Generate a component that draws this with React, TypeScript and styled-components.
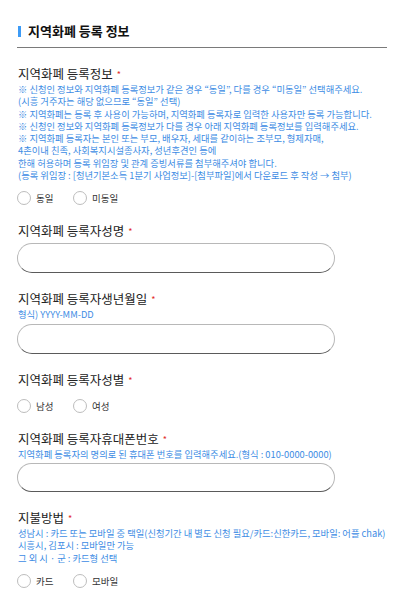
import styled, { createGlobalStyle } from "styled-components";

const GlobalStyle = createGlobalStyle`
  html, body {
    margin: 0;
    padding: 0;
    background: #ffffff;
  }
  body {
    font-family: "Noto Sans CJK KR", "Noto Sans", sans-serif;
    color: #222222;
  }
`;

/**
 * 라디오 옵션 타입
 */
interface RadioGroupProps {
  name: string;
  options: string[];
}

/**
 * 라디오 그룹 컴포넌트
 */
const RadioGroup = ({ name, options }: RadioGroupProps) => (
  <RadioRow>
    {options.map((option) => (
      <RadioOption key={option}>
        <RadioCircle type="radio" name={name} />
        <span>{option}</span>
      </RadioOption>
    ))}
  </RadioRow>
);

const registerNotes = [
  "※ 신청인 정보와 지역화폐 등록정보가 같은 경우 “동일”, 다를 경우 “미동일” 선택해주세요.",
  "(시흥 거주자는 해당 없으므로 “동일” 선택)",
  "※ 지역화폐는 등록 후 사용이 가능하며, 지역화폐 등록자로 입력한 사용자만 등록 가능합니다.",
  "※ 신청인 정보와 지역화폐 등록정보가 다를 경우 아래 지역화폐 등록정보를 입력해주세요.",
  "※ 지역화폐 등록자는 본인 또는 부모, 배우자, 세대를 같이하는 조부모, 형제자매,",
  "4촌이내 친족, 사회복지시설종사자, 성년후견인 등에",
  "한해 허용하며 등록 위임장 및 관계 증빙서류를 첨부해주셔야 합니다.",
  "(등록 위임장 : [청년기본소득 1분기 사업정보]-[첨부파일]에서 다운로드 후 작성 → 첨부)",
];

const payNotes = [
  "성남시 : 카드 또는 모바일 중 택일(신청기간 내 별도 신청 필요/카드:신한카드, 모바일: 어플 chak)",
  "시흥시, 김포시 : 모바일만 가능",
  "그 외 시 · 군 : 카드형 선택",
];

/**
 * 지역화폐 등록 정보 폼
 */
const App = () => {
  return (
    <>
      <GlobalStyle />
      <Page>
        {/* 타이틀 */}
        <Header>
          <TitleBar />
          <Title>지역화폐 등록 정보</Title>
        </Header>

        {/* 등록정보 동일 여부 */}
        <Section>
          <Label>
            지역화폐 등록정보<Required>*</Required>
          </Label>
          <Notes>
            {registerNotes.map((line) => (
              <NoteLine key={line}>{line}</NoteLine>
            ))}
          </Notes>
          <RadioGroup name="same" options={["동일", "미동일"]} />
        </Section>

        <Section>
          <Label>
            지역화폐 등록자성명<Required>*</Required>
          </Label>
          <TextInput type="text" />
        </Section>

        <Section>
          <Label>
            지역화폐 등록자생년월일<Required>*</Required>
          </Label>
          <Notes>
            <NoteLine>형식) YYYY-MM-DD</NoteLine>
          </Notes>
          <TextInput type="text" />
        </Section>

        <Section>
          <Label>
            지역화폐 등록자성별<Required>*</Required>
          </Label>
          <RadioGroup name="gender" options={["남성", "여성"]} />
        </Section>

        <Section>
          <Label>
            지역화폐 등록자휴대폰번호<Required>*</Required>
          </Label>
          <Notes>
            <NoteLine>
              지역화폐 등록자의 명의로 된 휴대폰 번호를 입력해주세요.(형식 : 010-0000-0000)
            </NoteLine>
          </Notes>
          <TextInput type="text" $height={29} />
        </Section>

        <Section>
          <Label>
            지불방법<Required>*</Required>
          </Label>
          <Notes>
            {payNotes.map((line) => (
              <NoteLine key={line}>{line}</NoteLine>
            ))}
          </Notes>
          <RadioGroup name="pay" options={["카드", "모바일"]} />
        </Section>
      </Page>
    </>
  );
};

export default App;

const Page = styled.div`
  width: 400px;
  height: 600px;
  overflow: hidden;
  box-sizing: border-box;
  padding: 23px 13px 0 17px;
`;

const Header = styled.div`
  display: flex;
  align-items: center;
  gap: 7px;
  padding: 0 0 8px 1px;
  border-bottom: 1px solid #7a7a7a;
`;

const TitleBar = styled.span`
  display: block;
  width: 3px;
  height: 11px;
  background: #3d9bf6;
`;

const Title = styled.h1`
  margin: 0;
  font-size: 13px;
  line-height: 16px;
  font-weight: 700;
  color: #111111;
`;

const Section = styled.div`
  display: flex;
  flex-direction: column;
  margin-top: 18px;
`;

const Label = styled.div`
  font-size: 12.5px;
  line-height: 16px;
  color: #222222;
  padding-left: 1px;
`;

const Required = styled.span`
  color: #e22b2b;
  font-size: 9px;
  margin-left: 4px;
  vertical-align: 1px;
`;

const Notes = styled.div`
  display: flex;
  flex-direction: column;
`;

const NoteLine = styled.div`
  font-size: 9.3px;
  line-height: 12.3px;
  color: #3d8ce4;
  white-space: nowrap;
  padding-left: 1px;
`;

const TextInput = styled.input<{ $height?: number }>`
  box-sizing: border-box;
  margin-top: 3px;
  width: 318px;
  height: ${({ $height }) => $height ?? 30}px;
  border: 1px solid #b8b8b8;
  border-bottom-color: #5a5a5a;
  border-radius: 15px;
  background: #ffffff;
  outline: none;
  padding: 0 12px;
`;

const RadioRow = styled.div`
  display: flex;
  margin-top: 10px;
  height: 14px;
`;

const RadioOption = styled.label`
  display: flex;
  align-items: center;
  gap: 5px;
  width: 56px;
  font-size: 9.5px;
  color: #333333;
`;

const RadioCircle = styled.input`
  appearance: none;
  margin: 0;
  width: 14px;
  height: 14px;
  border: 1px solid #bdbdbd;
  border-radius: 50%;
  background: #ffffff;
  box-sizing: border-box;
`;
